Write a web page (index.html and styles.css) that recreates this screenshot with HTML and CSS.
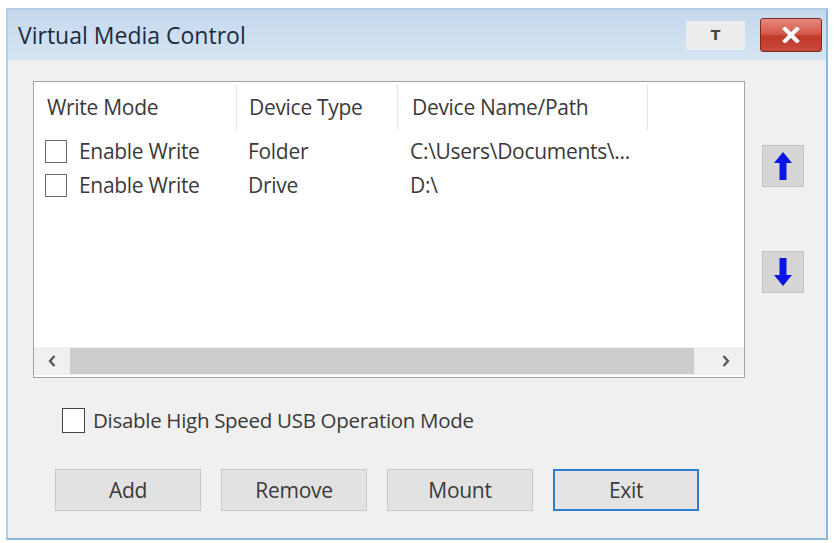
FILE: index.html
```html
<html>
<head>
	<meta charset="utf-8" />
	<title>Virtual Media Control</title>
	<link rel="stylesheet" href="styles.css">
</head>

<body>
	<div class="window">
		<div class="titlebar">
			<span class="title">Virtual Media Control</span>
			<div class="tbtn pin">T</div>
			<div class="tbtn close">
				<svg width="20" height="16" viewBox="0 0 20 16">
					<path d="M4 2 L16 14 M16 2 L4 14" stroke="#fff" stroke-width="4" stroke-linecap="square" />
				</svg>
			</div>
		</div>

		<div class="client">
			<div class="list-area">
				<div class="list">
					<div class="list-head">
						<div class="col col-mode">Write Mode</div>
						<div class="col col-type">Device Type</div>
						<div class="col col-name">Device Name/Path</div>
						<div class="col col-rest"></div>
					</div>
					<div class="list-row">
						<div class="col col-mode"><span class="box"></span>Enable Write</div>
						<div class="col col-type">Folder</div>
						<div class="col col-name">C:\Users\Documents\...</div>
					</div>
					<div class="list-row">
						<div class="col col-mode"><span class="box"></span>Enable Write</div>
						<div class="col col-type">Drive</div>
						<div class="col col-name">D:\</div>
					</div>
					<div class="list-fill"></div>
					<div class="hscroll">
						<span class="arrow">
							<svg width="10" height="14" viewBox="0 0 10 14"><path d="M7.5 2 L3 7 L7.5 12" fill="none" stroke="#5a5a5a" stroke-width="2.4" /></svg>
						</span>
						<div class="thumb"></div>
						<span class="arrow">
							<svg width="10" height="14" viewBox="0 0 10 14"><path d="M2.5 2 L7 7 L2.5 12" fill="none" stroke="#5a5a5a" stroke-width="2.4" /></svg>
						</span>
					</div>
				</div>

				<div class="side">
					<div class="move up">
						<svg width="20" height="30" viewBox="0 0 20 30">
							<path d="M10 1 L19 12 L13.5 12 L13.5 29 L6.5 29 L6.5 12 L1 12 Z" fill="#0a14e6" />
						</svg>
					</div>
					<div class="move down">
						<svg width="20" height="30" viewBox="0 0 20 30">
							<path d="M10 29 L19 18 L13.5 18 L13.5 1 L6.5 1 L6.5 18 L1 18 Z" fill="#0a14e6" />
						</svg>
					</div>
				</div>
			</div>

			<label class="usb"><span class="box big"></span>Disable High Speed USB Operation Mode</label>

			<div class="buttons">
				<div class="btn">Add</div>
				<div class="btn">Remove</div>
				<div class="btn">Mount</div>
				<div class="btn default">Exit</div>
			</div>
		</div>
	</div>
</body>
</html>
```

FILE: styles.css
```css
body {
	margin: 0;
	padding: 8px 0 0 6px;
	background-color: #ffffff;
	font-family: "Open Sans", "Noto Sans", Arial, sans-serif;
	color: #3a3a3a;
}

.window {
	width: 818px;
	height: 528px;
	border: 2px solid #8fb6dd;
	border-top-color: #b5cde6;
	border-left-color: #b5cde6;
	background-color: #f0f0f0;
	display: flex;
	flex-direction: column;
}

.titlebar {
	height: 50px;
	display: flex;
	align-items: center;
	background: linear-gradient(#c4d8ed, #d6e4f2);
	padding: 0 4px 0 10px;
}

.title {
	flex: 1;
	font-size: 23px;
	color: #1d2b40;
}

.tbtn {
	display: flex;
	align-items: center;
	justify-content: center;
}

.pin {
	width: 59px;
	height: 29px;
	background-color: #ececec;
	font-family: "DejaVu Sans", sans-serif;
	font-weight: bold;
	font-size: 14px;
	color: #444;
	margin-right: 15px;
}

.close {
	width: 60px;
	height: 32px;
	border: 1px solid #7d2a22;
	border-radius: 3px;
	background: linear-gradient(#e38a7f 0%, #d65a4c 45%, #c0392b 55%, #c94a3c 100%);
}

.client {
	flex: 1;
	padding: 21px 0 0 25px;
}

.list-area {
	display: flex;
}

.list {
	width: 710px;
	height: 295px;
	border: 1px solid #a5a5a5;
	background-color: #ffffff;
	display: flex;
	flex-direction: column;
	font-size: 21px;
	letter-spacing: -0.3px;
}

.list-head {
	height: 52px;
	display: flex;
}

.list-head .col {
	border-right: 1px solid #e6e6e6;
	margin: 2px 0 4px 0;
	display: flex;
	align-items: center;
}

.list-row {
	height: 34px;
	display: flex;
	align-items: center;
}

.col {
	display: flex;
	align-items: center;
	white-space: nowrap;
}

.col-mode {
	width: 189px;
	padding-left: 13px;
}

.col-type {
	width: 148px;
	padding-left: 12px;
}

.col-name {
	width: 235px;
	padding-left: 14px;
}

.col-rest {
	flex: 1;
}

.list-head .col-rest {
	border-right: none;
}

.list-row .col-mode {
	padding-left: 11px;
	width: 191px;
}

.box {
	display: inline-block;
	width: 20px;
	height: 21px;
	border: 1px solid #6b6b6b;
	background-color: #fff;
	margin-right: 12px;
}

.list-fill {
	flex: 1;
}

.hscroll {
	height: 28px;
	display: flex;
	align-items: center;
	background-color: #f0f0f0;
	margin-bottom: 2px;
}

.hscroll .arrow {
	width: 36px;
	height: 28px;
	display: flex;
	align-items: center;
	justify-content: center;
}

.thumb {
	flex: 1;
	height: 26px;
	background-color: #cdcdcd;
	margin-right: 14px;
}

.side {
	display: flex;
	flex-direction: column;
	padding: 64px 0 0 17px;
}

.move {
	width: 40px;
	height: 40px;
	border: 1px solid #c4c4c4;
	background-color: #d6d6d6;
	display: flex;
	align-items: center;
	justify-content: center;
}

.down {
	margin-top: 64px;
}

.usb {
	display: flex;
	align-items: center;
	margin: 28px 0 0 29px;
	font-size: 20.5px;
	letter-spacing: -0.3px;
}

.box.big {
	width: 21px;
	height: 23px;
	border-color: #444;
	margin-right: 8px;
}

.buttons {
	display: flex;
	margin: 35px 0 0 22px;
}

.btn {
	width: 144px;
	height: 40px;
	border: 1px solid #c9c9c9;
	background-color: #e2e2e2;
	display: flex;
	align-items: center;
	justify-content: center;
	font-size: 21px;
	letter-spacing: -0.3px;
	margin-right: 20px;
}

.btn.default {
	border: 2px solid #2b7fd0;
	width: 142px;
	height: 38px;
	background-color: #e4e4e4;
}
```
